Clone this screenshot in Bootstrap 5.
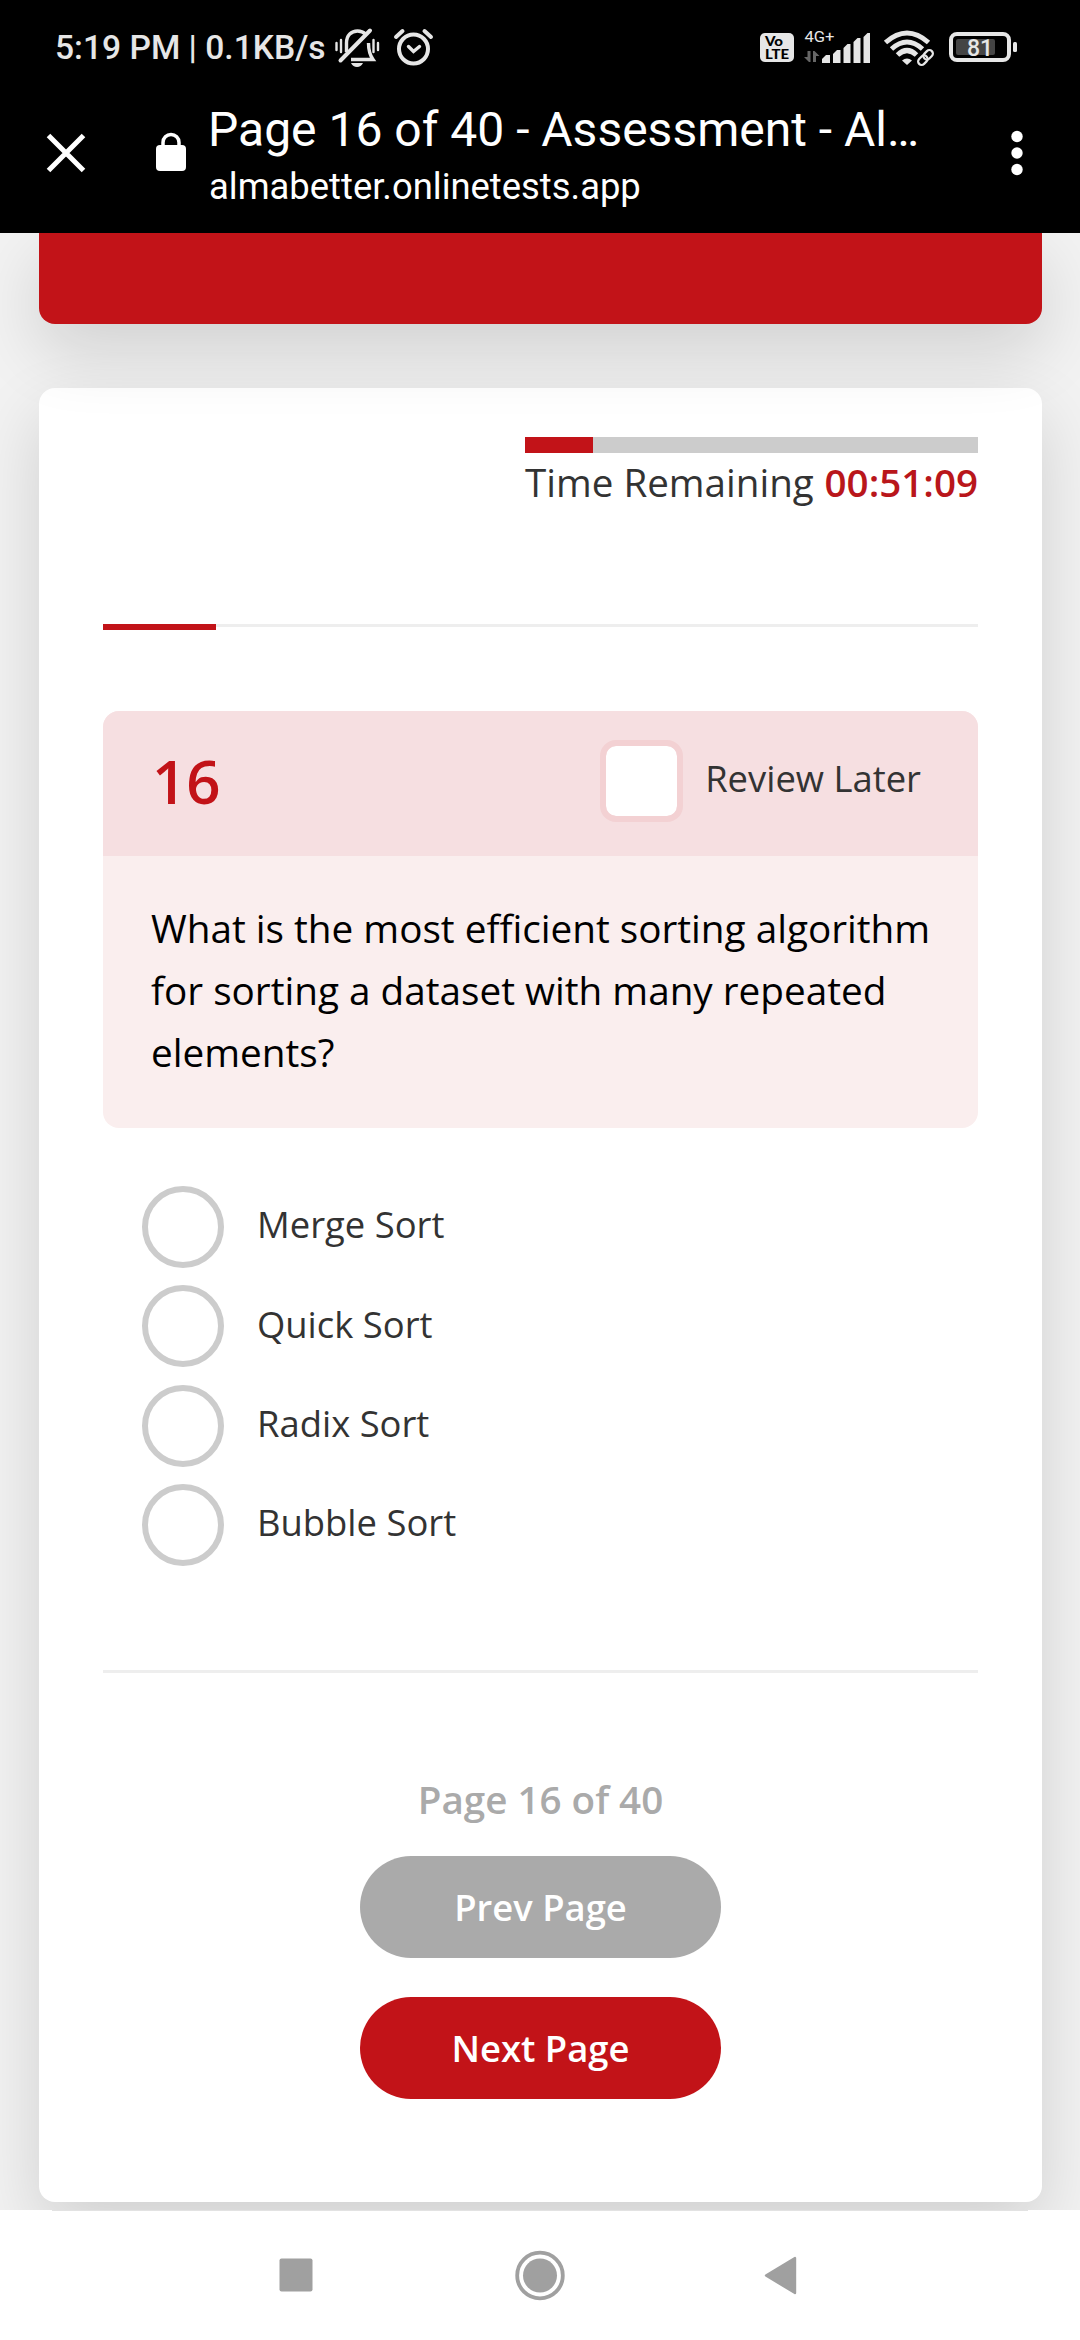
<!DOCTYPE html>
<html lang="en">
<head>
<meta charset="utf-8">
<meta name="viewport" content="width=device-width, initial-scale=1">
<title>Page 16 of 40 - Assessment - AlmaBetter</title>
<link rel="stylesheet" href="https://cdn.jsdelivr.net/npm/bootstrap@5.3.0/dist/css/bootstrap.min.css">
<style>
:root{--brand:#c21318}
body{width:1080px;height:2340px;background:#f2f2f2;font-family:"Open Sans",sans-serif;color:#333;line-height:1.5}
.phone{height:2340px}
.chrome-top{height:233px;background:#000;font-family:Roboto,sans-serif;z-index:3}
.status{height:94px;color:#e6e6e6;font-size:33.6px;font-weight:500}
.status-text{margin-left:55px;padding-top:1px;line-height:40px;white-space:nowrap}
.tabbar{height:139px;color:#fff}
.tab-title{font-size:48px;line-height:56px;padding-top:8px;margin-left:-2px;white-space:nowrap}
.tab-url{font-size:36.4px;line-height:46px;padding-top:6px;margin-left:-1px;white-space:nowrap}
.page-area{height:1977px;padding:0 38px 0 39px;z-index:1}
.banner,.sheet{box-shadow:0 27px 69px rgba(0,0,0,.14)}
.banner{height:91px;background:var(--brand);border-radius:0 0 16px 16px;z-index:1}
.sheet{margin-top:64px;height:1814px;border-radius:16px;padding:49px 64px 0;border:0}
.timer{width:453px;font-size:38.6px;line-height:54px;white-space:nowrap}
.timer .progress{height:16px;border-radius:0;background:#ccc;margin-bottom:2px}
.timer .progress-bar,.pageline .progress-bar{background:var(--brand)}
.timer strong{font-weight:600;color:#b9161b}
.pageline{margin-top:115px;height:6px}
.rule{height:3px;background:#eee}
.pageline .progress-bar{height:6px;margin-top:-3px}
.question{margin-top:81px;border:0;border-radius:16px;background:#faeeee;overflow:hidden}
.q-head{height:145px;background:#f6dfe1;padding:0 57px 5px 49px;border:0}
.q-num{font-size:60px;font-weight:600;color:var(--brand);line-height:80px}
.review{font-size:36.4px;gap:22px}
.review span,.answers span{padding-bottom:5px}
.form-check-input.later{width:83px;height:82px;margin:0;border:6px solid #f3d1d3;border-radius:16px;float:none;background-clip:padding-box}
.q-body{height:272px;padding:41px 48px 0;font-size:38.7px;line-height:62px;color:#000;white-space:nowrap}
.answers{margin:58px 0 0 39px;gap:17.4px;font-size:36.4px}
.answers .form-check-input{width:82px;height:82px;border:6px solid #ccc;margin:0;float:none}
.answers .form-check{gap:33px;padding:0;margin:0;min-height:0}
.pager{margin-top:104px}
.pageno{margin-top:98px;font-size:38.6px;font-weight:600;color:#aaa;line-height:56px}
.btn-page{width:361px;height:102px;border:0;font-size:36.4px;font-weight:600;color:#fff}
.btn-prev{background:#aaa;margin-top:29px}
.btn-next{background:var(--brand);margin-top:39px}
.sysnav{height:130px;background:#fff;z-index:3}
svg{display:block;flex:none}
</style>
</head>
<body class="overflow-hidden">
<div class="phone d-flex flex-column">
  <header class="chrome-top position-relative flex-shrink-0">
    <div class="status d-flex align-items-center">
      <span class="status-text">5:19 PM | 0.1KB/s</span>
      <svg class="ms-auto" width="750" height="94" viewBox="330 0 750 94" fill="#e6e6e6">
        <!-- muted bell -->
        <g fill="none" stroke="#e6e6e6" stroke-width="3.4">
          <path d="M346.500 52V43c0-8 5-12 11-12c3 0 6 1 8 3M368.500 43c0 9 2 13 4.500 16.500H351"/>
          <path d="M340.500 60.500L370 30.500" stroke-width="4" stroke-linecap="round"/>
          <path d="M336.500 43v7M341 40v12M373.500 40v12M378 43v7" stroke-width="2.400" stroke-linecap="round"/>
        </g>
        <path d="M351 63h12q-2 4-6 4t-6-4z"/>
        <g fill="none" stroke="#e6e6e6" stroke-width="4">
          <circle cx="413.500" cy="49" r="14.500"/>
          <path d="M396 37L402.500 31M431 37L424.500 31" stroke-linecap="round"/>
          <path d="M408.500 46.500l5 5l6-5" stroke-width="3.400" stroke-linecap="round"/>
        </g>
        <rect x="760" y="33" width="34" height="29" rx="5"/>
        <g fill="#000" font-family="Lato,sans-serif" font-weight="900" font-size="13">
          <text x="765" y="46" textLength="18" lengthAdjust="spacingAndGlyphs">Vo</text>
          <text x="765" y="59" textLength="24" lengthAdjust="spacingAndGlyphs">LTE</text>
        </g>
        <text x="804.500" y="42" font-size="15.500" font-weight="400" textLength="30" lengthAdjust="spacingAndGlyphs">4G+</text>
        <path fill="#666" d="M807.500 51h3v11h-1.500l-5-5h3.500zM813 62h3v-6h3.500l-5-5H813z"/>
        <path d="M822 63v-4l4-4h4v8zM833 63V54l4-4h3.500v13zM843.500 63V48l4-4h3v19zM853.500 63V42l4-4h3v25zM863.500 63V37l4-4h2.500v30z"/>
        <g fill="none" stroke="#e6e6e6" stroke-width="5">
          <path d="M885.500 42.500Q907 23.500 928.500 42.500"/><path d="M891.500 49Q907 35 922.500 49"/><path d="M897.500 55Q907 46 916.500 55"/>
        </g>
        <path d="M902 60.500q5-4 10 0l-5 4.500z"/>
        <g transform="rotate(-45 925.500 57.500)" fill="none" stroke="#000" stroke-width="6"><rect x="916" y="54" width="10" height="7" rx="3.500"/><rect x="925" y="54" width="10" height="7" rx="3.500"/></g>
        <g transform="rotate(-45 925.500 57.500)" fill="none" stroke="#e6e6e6" stroke-width="2.200"><rect x="916.500" y="54" width="10.500" height="7" rx="3.500"/><rect x="924" y="54" width="10.500" height="7" rx="3.500"/></g>
        <rect x="951" y="34" width="58" height="26" rx="6" fill="none" stroke="#e6e6e6" stroke-width="4"/>
        <rect x="1013" y="42" width="4" height="10" rx="1.500"/>
        <rect x="956" y="39" width="39" height="16" rx="2" fill="#444"/>
        <text x="980" y="55.500" font-size="23" text-anchor="middle">81</text>
      </svg>
    </div>
    <div class="tabbar d-flex">
      <svg width="210" height="139" viewBox="0 94 210 139" fill="#fff">
        <path d="M48.500 135.500L83.500 170.500M83.500 135.500L48.500 170.500" stroke="#fff" stroke-width="5"/>
        <rect x="156" y="145" width="30" height="26" rx="4"/>
        <path d="M163 147v-4.500a8 8 0 0 1 16 0V147" fill="none" stroke="#fff" stroke-width="3.500"/>
      </svg>
      <div class="flex-grow-1">
        <div class="tab-title"><span>Page 16 of 40 - Assessment - Al…</span></div>
        <div class="tab-url"><span>almabetter.onlinetests.app</span></div>
      </div>
      <svg width="130" height="139" viewBox="950 94 130 139" fill="#fff"><circle cx="1017" cy="136.500" r="5.700"/><circle cx="1017" cy="153" r="5.700"/><circle cx="1017" cy="169.500" r="5.700"/></svg>
    </div>
  </header>

  <main class="page-area position-relative flex-shrink-0">
    <div class="banner position-relative"></div>
    <section class="sheet card">
      <div class="timer ms-auto">
        <div class="progress"><div class="progress-bar" style="width:15%"></div></div>
        <div class="d-flex justify-content-between"><span>Time Remaining</span><strong>00:51:09</strong></div>
      </div>
      <div class="pageline"><div class="rule"></div><div class="progress-bar" style="width:12.9%"></div></div>

      <article class="question card">
        <div class="card-header q-head d-flex align-items-center justify-content-between">
          <span class="q-num">16</span>
          <label class="review d-flex align-items-center"><input class="form-check-input later" type="checkbox"><span>Review Later</span></label>
        </div>
        <div class="q-body">What is the most efficient sorting algorithm<br>for sorting a dataset with many repeated<br>elements?</div>
      </article>

      <div class="answers d-flex flex-column">
        <label class="form-check d-flex align-items-center"><input class="form-check-input" type="radio" name="a"><span>Merge Sort</span></label>
        <label class="form-check d-flex align-items-center"><input class="form-check-input" type="radio" name="a"><span>Quick Sort</span></label>
        <label class="form-check d-flex align-items-center"><input class="form-check-input" type="radio" name="a"><span>Radix Sort</span></label>
        <label class="form-check d-flex align-items-center"><input class="form-check-input" type="radio" name="a"><span>Bubble Sort</span></label>
      </div>

      <div class="pager d-flex flex-column align-items-center">
        <div class="rule w-100"></div>
        <div class="pageno">Page 16 of 40</div>
        <button class="btn btn-page btn-prev rounded-pill" type="button">Prev Page</button>
        <button class="btn btn-page btn-next rounded-pill" type="button">Next Page</button>
      </div>
    </section>
  </main>

  <nav class="sysnav position-relative flex-shrink-0">
    <svg width="1080" height="130" viewBox="0 2210 1080 130" fill="#a0a0a0">
      <rect x="52" y="2210" width="976" height="1" fill="#e2e2e2"/>
      <rect x="279.500" y="2258.500" width="33" height="33" rx="2"/>
      <circle cx="540" cy="2275.500" r="17"/><circle cx="540" cy="2275.500" r="22.800" fill="none" stroke="#a0a0a0" stroke-width="3.800"/>
      <path d="M766 2275.500L795 2258V2293z" stroke="#a0a0a0" stroke-width="2.400" stroke-linejoin="round"/>
    </svg>
  </nav>
</div>
<script src="https://cdn.jsdelivr.net/npm/bootstrap@5.3.0/dist/js/bootstrap.bundle.min.js"></script>
</body>
</html>
